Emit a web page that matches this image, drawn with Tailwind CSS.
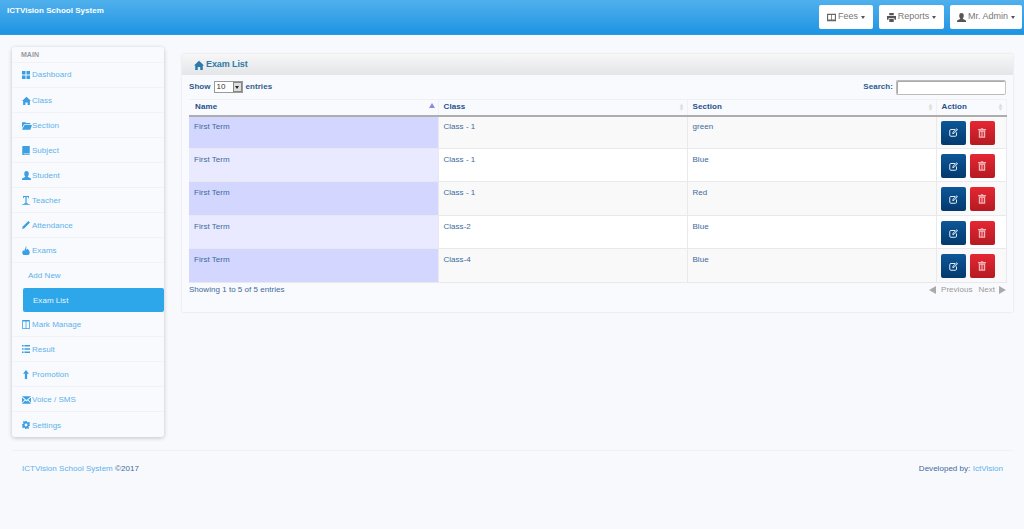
<!DOCTYPE html>
<html lang="en">
<head>
  <meta charset="UTF-8" />
  <title>ICTVision School System</title>
  <script src="https://cdn.jsdelivr.net/npm/@tailwindcss/browser@4"></script>
</head>
<body class="bg-[#f8f9fc] h-[529px] overflow-hidden font-['Liberation_Sans',sans-serif] text-[8px] tracking-[0.03px] text-[#3d6a9c]">

  <!-- top bar -->
  <header class="h-[35px] flex justify-between bg-gradient-to-b from-[#4fb0ec] to-[#1a94e3] border-b border-[#2b9ae0] pl-[7px] pr-[2px]">
    <div class="text-white font-bold text-[8px] pt-[6px] leading-[10px] tracking-[0.02px]">ICTVision School System</div>
    <div class="flex gap-[6px] pt-[5px] pb-[5px] text-[#777] text-[9px] tracking-[0px]">
      <button class="w-[54px] h-[24px] bg-white rounded-[2px] flex items-center justify-center gap-[2px]">
        <svg class="w-[9px] h-[9px]" viewBox="0 0 12 12" fill="#666"><path d="M0 1h12v10H0zM1.500 2.500v6h4v-6zm5 0v6h4v-6z" fill-rule="evenodd"/></svg>Fees<span class="w-0 h-0 ml-[1px] border-x-[2.500px] border-x-transparent border-t-[3px] border-t-[#555]"></span>
      </button>
      <button class="w-[65px] h-[24px] bg-white rounded-[2px] flex items-center justify-center gap-[2px]">
        <svg class="w-[9px] h-[9px]" viewBox="0 0 12 12" fill="#555"><path d="M3 0h6v3H3zM0 4h12v5h-2V7H2v2H0zM3 8h6v4H3z"/></svg>Reports<span class="w-0 h-0 ml-[1px] border-x-[2.500px] border-x-transparent border-t-[3px] border-t-[#555]"></span>
      </button>
      <button class="w-[72px] h-[24px] bg-white rounded-[2px] flex items-center justify-center gap-[2px]">
        <svg class="w-[9px] h-[9px]" viewBox="0 0 12 12" fill="#555"><path d="M6 0c2 0 3 1.500 3 3.500S8 7 7.500 7.500c1 .8 4.500 1.500 4.500 3V12H0v-1.500c0-1.500 3.500-2.200 4.500-3C4 7 3 5.500 3 3.500S4 0 6 0z"/></svg>Mr. Admin<span class="w-0 h-0 ml-[1px] border-x-[2.500px] border-x-transparent border-t-[3px] border-t-[#555]"></span>
      </button>
    </div>
  </header>

  <div class="flex items-start pl-[12px] pr-[11px]">
    <!-- sidebar -->
    <aside class="w-[152px] h-[390px] mt-[12px] shrink-0 rounded-[3px] bg-[#f9fafd] shadow-[0_1px_4px_rgba(0,0,0,0.22)] text-[#5cb2ec]">
      <div class="h-[15px] pl-[9px] pt-[3px] leading-[10px] text-[7px] font-bold text-[#999]">MAIN</div>
      <ul class="px-[1px]">
        <li class="h-[26px] flex items-center gap-[2px] pl-[9px] border-t border-b border-[#f1f2f5]">
          <svg class="w-[8px] h-[8px]" viewBox="0 0 8 8" fill="#3a9fe3"><path d="M0 0h3.500v3.500H0zM4.500 0H8v3.500H4.500zM0 4.500h3.500V8H0zM4.500 4.500H8V8H4.500z"/></svg>Dashboard</li>
        <li class="h-[25px] pt-[1px] flex items-center gap-[1px] pl-[9px] border-b border-[#f1f2f5]">
          <svg class="w-[9px] h-[9px] mb-[1px]" viewBox="0 0 12 12" fill="#3a9fe3"><path d="M6 1l6 5.500h-1.500V12H7.500V8.500h-3V12H1.500V6.500H0z"/></svg>Class</li>
        <li class="h-[25px] pt-[1px] flex items-center gap-[0px] pl-[9px] border-b border-[#f1f2f5]">
          <svg class="w-[10px] h-[9px] mb-[1px]" viewBox="0 0 12 10" fill="#3a9fe3"><path d="M0 1h4l1 1h5v1.500H2.500L0 8zM3 4.500h9L10 10H0z"/></svg>Section</li>
        <li class="h-[25px] pt-[1px] flex items-center gap-[2px] pl-[9px] border-b border-[#f1f2f5]">
          <svg class="w-[8px] h-[9px] mb-[1px]" viewBox="0 0 10 12" fill="#3a9fe3"><path d="M1.500 0H10v10H2a1 1 0 000 1h8v1H1.500C.5 12 0 11.500 0 10.500V1.500C0 .5.500 0 1.500 0z"/></svg>Subject</li>
        <li class="h-[25px] pt-[1px] flex items-center gap-[1px] pl-[9px] border-b border-[#f1f2f5]">
          <svg class="w-[9px] h-[9px] mb-[1px]" viewBox="0 0 12 12" fill="#3a9fe3"><path d="M6 0c2 0 3 1.500 3 3.500S8 7 7.500 7.500c1 .8 4.500 1.500 4.500 3V12H0v-1.500c0-1.500 3.500-2.200 4.500-3C4 7 3 5.500 3 3.500S4 0 6 0z"/></svg>Student</li>
        <li class="h-[25px] pt-[1px] flex items-center gap-[2px] pl-[9px] border-b border-[#f1f2f5]">
          <svg class="w-[8px] h-[9px] mb-[1px]" viewBox="0 0 10 12" fill="#3a9fe3"><path d="M1 0h8v3H8V1.200H5.800V9.500H7.500v1H2.500v-1h1.700V1.200H2V3H1zM0 11h10v1H0z"/></svg>Teacher</li>
        <li class="h-[25px] pt-[1px] flex items-center gap-[2px] pl-[9px] border-b border-[#f1f2f5]">
          <svg class="w-[8px] h-[8px] mb-[1px]" viewBox="0 0 10 10" fill="#3a9fe3"><path d="M8 0l2 2-7 7-3 1 1-3z"/></svg>Attendance</li>
        <li class="h-[25px] pt-[1px] flex items-center gap-[2px] pl-[9px] border-b border-[#f1f2f5]">
          <svg class="w-[8px] h-[9px] mb-[1px]" viewBox="0 0 10 12" fill="#3a9fe3"><path d="M5 0c1 2 .5 3 0 4l1 1 1-1.500c2 2 3 3.500 3 5 0 2-1.500 3.500-3 3.500H3c-1.500 0-3-1.500-3-3.500 0-1.500 1-2.500 1.500-3l1 1.500C3 5 4.500 3 5 0z"/></svg>Exams</li>
        <li class="h-[25px] pt-[1px] flex items-center pl-[15px]">Add New</li>
        <li class="h-[24px] pt-[1px] ml-[10px] -mr-[1px] flex items-center pl-[10px] bg-[#2ea6ea] rounded-[2px] text-[#e8f5fd]">Exam List</li>
        <li class="h-[25px] pt-[1px] flex items-center gap-[2px] pl-[9px] border-b border-[#f1f2f5]">
          <svg class="w-[8px] h-[9px] mb-[1px]" viewBox="0 0 10 12" fill="#3a9fe3"><path fill-rule="evenodd" d="M0 0h10v12H0zM1 2v9h3.500V2zM5.500 2v9H9V2z"/></svg>Mark Manage</li>
        <li class="h-[25px] pt-[1px] flex items-center gap-[2px] pl-[9px] border-b border-[#f1f2f5]">
          <svg class="w-[8px] h-[8px] mb-[1px]" viewBox="0 0 10 10" fill="#3a9fe3"><path d="M0 0h2v2H0zM3 0h7v2H3zM0 4h2v2H0zM3 4h7v2H3zM0 8h2v2H0zM3 8h7v2H3z"/></svg>Result</li>
        <li class="h-[25px] pt-[1px] flex items-center gap-[2px] pl-[9px] border-b border-[#f1f2f5]">
          <svg class="w-[8px] h-[9px] mb-[1px]" viewBox="0 0 10 12" fill="#3a9fe3"><path d="M5 0l4 5H6.500v7h-3V5H1z"/></svg>Promotion</li>
        <li class="h-[25px] pt-[2px] flex items-center gap-[1px] pl-[9px] border-b border-[#f1f2f5]">
          <svg class="w-[9px] h-[8px] mb-[1px]" viewBox="0 0 12 10" fill="#3a9fe3"><path d="M0 0h12L6 5zM0 1.800l3.500 3L0 8.500zM12 1.800v6.700L8.500 4.800zM4.300 5.500L6 7l1.700-1.500L12 10H0z"/></svg>Voice / SMS</li>
        <li class="h-[25px] pt-[2px] flex items-center gap-[2px] pl-[9px]">
          <svg class="w-[8px] h-[8px] mb-[1px]" viewBox="0 0 10 10" fill="#3a9fe3"><path fill-rule="evenodd" d="M4 0h2l.3 1.400 1.200.5L8.700 1 10 2.400l-.9 1.200.5 1.200L10 5v1l-1.400.3-.5 1.200.9 1.200L7.600 10l-1.200-.9-1.200.5L5 10H4l-.3-1.400-1.200-.5L1.300 9 0 7.600l.9-1.200-.5-1.200L0 5V4l1.400-.3.5-1.200L1 1.300 2.400 0l1.200.9L4 .5zM5 3.200a1.800 1.800 0 100 3.600 1.800 1.800 0 000-3.600z"/></svg>Settings</li>
      </ul>
    </aside>

    <!-- main panel -->
    <main class="w-[831px] h-[258px] mt-[19px] ml-[18px] bg-[#f9fafd] shadow-[0_0_2px_rgba(0,0,0,0.16)] rounded-[1px]">
      <div class="h-[21px] pt-[1px] flex items-center gap-[2px] pl-[12px] bg-gradient-to-b from-[#f7f7f8] to-[#e4e5e7] text-[#2f7ba8] font-bold text-[9px] tracking-[-0.1px]">
        <svg class="w-[10px] h-[10px] mb-[1px]" viewBox="0 0 12 12" fill="#2a7aac"><path d="M6 1l6 5.500h-1.500V12H7.500V8.500h-3V12H1.500V6.500H0z"/></svg>Exam List</div>
      <div class="px-[7px]">
        <div class="h-[24px] flex items-center justify-between font-bold text-[#2d5a8e] tracking-[0.05px]">
          <div class="flex items-center">Show
            <span class="w-[29px] h-[12px] mx-[3px] flex items-center justify-between border border-[#999] bg-white pl-[2px] font-normal text-[#333]">10
              <span class="w-[9px] h-[10px] bg-[#ddd] border border-[#888] flex items-center justify-center"><span class="w-0 h-0 border-x-[2px] border-x-transparent border-t-[3px] border-t-[#222]"></span></span>
            </span>entries</div>
          <div class="flex items-center gap-[3px]">Search:
            <span class="w-[110px] h-[15px] bg-white border border-[#bbb] border-r-[#c8c4bc] rounded-[2px] shadow-[inset_1px_1px_0_#aaa]"></span></div>
        </div>

        <table class="w-[817px] table-fixed border-collapse">
          <thead>
            <tr class="h-[16px] text-left font-bold text-[#1f4f8b] bg-[#f9fafd] tracking-[0.1px]">
              <th class="w-[249px] pl-[6px] border border-l-0 border-[#f0f1f3] border-b-2 border-b-[#adadad] relative">Name<span class="absolute right-[3px] top-[3px] w-0 h-0 border-x-[3px] border-x-transparent border-b-[5px] border-b-[#8a8ae0]"></span></th>
              <th class="w-[249px] pl-[5px] border border-[#f0f1f3] border-b-2 border-b-[#adadad] relative">Class<span class="absolute right-[3px] top-[3px] w-[5px] h-[9px] text-[#ddd] leading-[4px] text-[6px]">▲<br>▼</span></th>
              <th class="w-[249px] pl-[5px] border border-[#f0f1f3] border-b-2 border-b-[#adadad] relative">Section<span class="absolute right-[3px] top-[3px] w-[5px] h-[9px] text-[#ddd] leading-[4px] text-[6px]">▲<br>▼</span></th>
              <th class="w-[70px] pl-[5px] border border-[#f0f1f3] border-b-2 border-b-[#adadad] relative">Action<span class="absolute right-[3px] top-[3px] w-[5px] h-[9px] text-[#ddd] leading-[4px] text-[6px]">▲<br>▼</span></th>
            </tr>
          </thead>
          <tbody>
            <tr class="bg-[#f9f9f9]">
              <td class="h-[33px] align-top pt-[5px] pl-[5px] leading-[10px] bg-[#d3d6ff] border-b border-[#e8e9ec]">First Term</td>
              <td class="align-top pt-[5px] pl-[5px] leading-[10px] border-l border-b border-[#e8e9ec]">Class - 1</td>
              <td class="align-top pt-[5px] pl-[5px] leading-[10px] border-l border-b border-[#e8e9ec]">green</td>
              <td class="align-top pt-[4px] pl-[4px] border-x border-b border-[#e8e9ec]">
                <div class="flex gap-[4px]">
                  <span class="w-[25px] h-[24px] rounded-[2px] bg-gradient-to-b from-[#0e5798] to-[#043a6e] flex items-center justify-center"><svg class="w-[9px] h-[9px]" viewBox="0 0 12 12" fill="none" stroke="#e8f0f8" stroke-width="1.300"><path d="M8 2H2.500A1.500 1.500 0 001 3.500v6A1.500 1.500 0 002.500 11h6A1.500 1.500 0 0010 9.500V6M5 7.500l.4-2L10.500 1 11.500 2 6.800 7z"/></svg></span>
                  <span class="w-[25px] h-[24px] rounded-[2px] bg-gradient-to-b from-[#e52733] to-[#b51a22] flex items-center justify-center"><svg class="w-[8px] h-[10px]" viewBox="0 0 10 12" fill="#f3b4b8"><path fill-rule="evenodd" d="M3.500 0h3v1H10v1.500H0V1h3.500zM1 3h8v9H1zM2.500 4.500v6h1v-6zM4.500 4.500v6h1v-6zM6.500 4.500v6h1v-6z"/></svg></span>
                </div>
              </td>
            </tr>
            <tr class="bg-white">
              <td class="h-[33px] align-top pt-[6px] pl-[5px] leading-[10px] bg-[#e9eaff] border-b border-[#e8e9ec]">First Term</td>
              <td class="align-top pt-[6px] pl-[5px] leading-[10px] border-l border-b border-[#e8e9ec]">Class - 1</td>
              <td class="align-top pt-[6px] pl-[5px] leading-[10px] border-l border-b border-[#e8e9ec]">Blue</td>
              <td class="align-top pt-[5px] pl-[4px] border-x border-b border-[#e8e9ec]">
                <div class="flex gap-[4px]">
                  <span class="w-[25px] h-[24px] rounded-[2px] bg-gradient-to-b from-[#0e5798] to-[#043a6e] flex items-center justify-center"><svg class="w-[9px] h-[9px]" viewBox="0 0 12 12" fill="none" stroke="#e8f0f8" stroke-width="1.300"><path d="M8 2H2.500A1.500 1.500 0 001 3.500v6A1.500 1.500 0 002.500 11h6A1.500 1.500 0 0010 9.500V6M5 7.500l.4-2L10.500 1 11.500 2 6.800 7z"/></svg></span>
                  <span class="w-[25px] h-[24px] rounded-[2px] bg-gradient-to-b from-[#e52733] to-[#b51a22] flex items-center justify-center"><svg class="w-[8px] h-[10px]" viewBox="0 0 10 12" fill="#f3b4b8"><path fill-rule="evenodd" d="M3.500 0h3v1H10v1.500H0V1h3.500zM1 3h8v9H1zM2.500 4.500v6h1v-6zM4.500 4.500v6h1v-6zM6.500 4.500v6h1v-6z"/></svg></span>
                </div>
              </td>
            </tr>
            <tr class="bg-[#f9f9f9]">
              <td class="h-[34px] align-top pt-[6px] pl-[5px] leading-[10px] bg-[#d3d6ff] border-b border-[#e8e9ec]">First Term</td>
              <td class="align-top pt-[6px] pl-[5px] leading-[10px] border-l border-b border-[#e8e9ec]">Class - 1</td>
              <td class="align-top pt-[6px] pl-[5px] leading-[10px] border-l border-b border-[#e8e9ec]">Red</td>
              <td class="align-top pt-[5px] pl-[4px] border-x border-b border-[#e8e9ec]">
                <div class="flex gap-[4px]">
                  <span class="w-[25px] h-[24px] rounded-[2px] bg-gradient-to-b from-[#0e5798] to-[#043a6e] flex items-center justify-center"><svg class="w-[9px] h-[9px]" viewBox="0 0 12 12" fill="none" stroke="#e8f0f8" stroke-width="1.300"><path d="M8 2H2.500A1.500 1.500 0 001 3.500v6A1.500 1.500 0 002.500 11h6A1.500 1.500 0 0010 9.500V6M5 7.500l.4-2L10.500 1 11.500 2 6.800 7z"/></svg></span>
                  <span class="w-[25px] h-[24px] rounded-[2px] bg-gradient-to-b from-[#e52733] to-[#b51a22] flex items-center justify-center"><svg class="w-[8px] h-[10px]" viewBox="0 0 10 12" fill="#f3b4b8"><path fill-rule="evenodd" d="M3.500 0h3v1H10v1.500H0V1h3.500zM1 3h8v9H1zM2.500 4.500v6h1v-6zM4.500 4.500v6h1v-6zM6.500 4.500v6h1v-6z"/></svg></span>
                </div>
              </td>
            </tr>
            <tr class="bg-white">
              <td class="h-[33px] align-top pt-[6px] pl-[5px] leading-[10px] bg-[#e9eaff] border-b border-[#e8e9ec]">First Term</td>
              <td class="align-top pt-[6px] pl-[5px] leading-[10px] border-l border-b border-[#e8e9ec]">Class-2</td>
              <td class="align-top pt-[6px] pl-[5px] leading-[10px] border-l border-b border-[#e8e9ec]">Blue</td>
              <td class="align-top pt-[5px] pl-[4px] border-x border-b border-[#e8e9ec]">
                <div class="flex gap-[4px]">
                  <span class="w-[25px] h-[24px] rounded-[2px] bg-gradient-to-b from-[#0e5798] to-[#043a6e] flex items-center justify-center"><svg class="w-[9px] h-[9px]" viewBox="0 0 12 12" fill="none" stroke="#e8f0f8" stroke-width="1.300"><path d="M8 2H2.500A1.500 1.500 0 001 3.500v6A1.500 1.500 0 002.500 11h6A1.500 1.500 0 0010 9.500V6M5 7.500l.4-2L10.500 1 11.500 2 6.800 7z"/></svg></span>
                  <span class="w-[25px] h-[24px] rounded-[2px] bg-gradient-to-b from-[#e52733] to-[#b51a22] flex items-center justify-center"><svg class="w-[8px] h-[10px]" viewBox="0 0 10 12" fill="#f3b4b8"><path fill-rule="evenodd" d="M3.500 0h3v1H10v1.500H0V1h3.500zM1 3h8v9H1zM2.500 4.500v6h1v-6zM4.500 4.500v6h1v-6zM6.500 4.500v6h1v-6z"/></svg></span>
                </div>
              </td>
            </tr>
            <tr class="bg-[#f9f9f9]">
              <td class="h-[34px] align-top pt-[6px] pl-[5px] leading-[10px] bg-[#d3d6ff] border-b border-[#e8e9ec]">First Term</td>
              <td class="align-top pt-[6px] pl-[5px] leading-[10px] border-l border-b border-[#e8e9ec]">Class-4</td>
              <td class="align-top pt-[6px] pl-[5px] leading-[10px] border-l border-b border-[#e8e9ec]">Blue</td>
              <td class="align-top pt-[5px] pl-[4px] border-x border-b border-[#e8e9ec]">
                <div class="flex gap-[4px]">
                  <span class="w-[25px] h-[24px] rounded-[2px] bg-gradient-to-b from-[#0e5798] to-[#043a6e] flex items-center justify-center"><svg class="w-[9px] h-[9px]" viewBox="0 0 12 12" fill="none" stroke="#e8f0f8" stroke-width="1.300"><path d="M8 2H2.500A1.500 1.500 0 001 3.500v6A1.500 1.500 0 002.500 11h6A1.500 1.500 0 0010 9.500V6M5 7.500l.4-2L10.500 1 11.500 2 6.800 7z"/></svg></span>
                  <span class="w-[25px] h-[24px] rounded-[2px] bg-gradient-to-b from-[#e52733] to-[#b51a22] flex items-center justify-center"><svg class="w-[8px] h-[10px]" viewBox="0 0 10 12" fill="#f3b4b8"><path fill-rule="evenodd" d="M3.500 0h3v1H10v1.500H0V1h3.500zM1 3h8v9H1zM2.500 4.500v6h1v-6zM4.500 4.500v6h1v-6zM6.500 4.500v6h1v-6z"/></svg></span>
                </div>
              </td>
            </tr>
          </tbody>
        </table>

        <div class="flex justify-between items-center h-[12px] mt-[1px]">
          <div>Showing 1 to 5 of 5 entries</div>
          <div class="flex items-center text-[#999]">
            <span class="w-0 h-0 border-y-[4px] border-y-transparent border-r-[7px] border-r-[#aaa]"></span>
            <span class="ml-[5px]">Previous</span><span class="ml-[6px]">Next</span>
            <span class="w-0 h-0 ml-[4px] border-y-[4px] border-y-transparent border-l-[7px] border-l-[#aaa]"></span>
          </div>
        </div>
      </div>
    </main>
  </div>

  <!-- footer -->
  <footer class="mt-[13px] ml-[12px] mr-[11px] border-t border-[#f0f1f4] flex justify-between pt-[13px] px-[10px] leading-[10px]">
    <div><span class="text-[#5cb2ec]">ICTVision School System</span> ©2017</div>
    <div>Developed by: <span class="text-[#5cb2ec]">IctVision</span></div>
  </footer>
</body>
</html>
